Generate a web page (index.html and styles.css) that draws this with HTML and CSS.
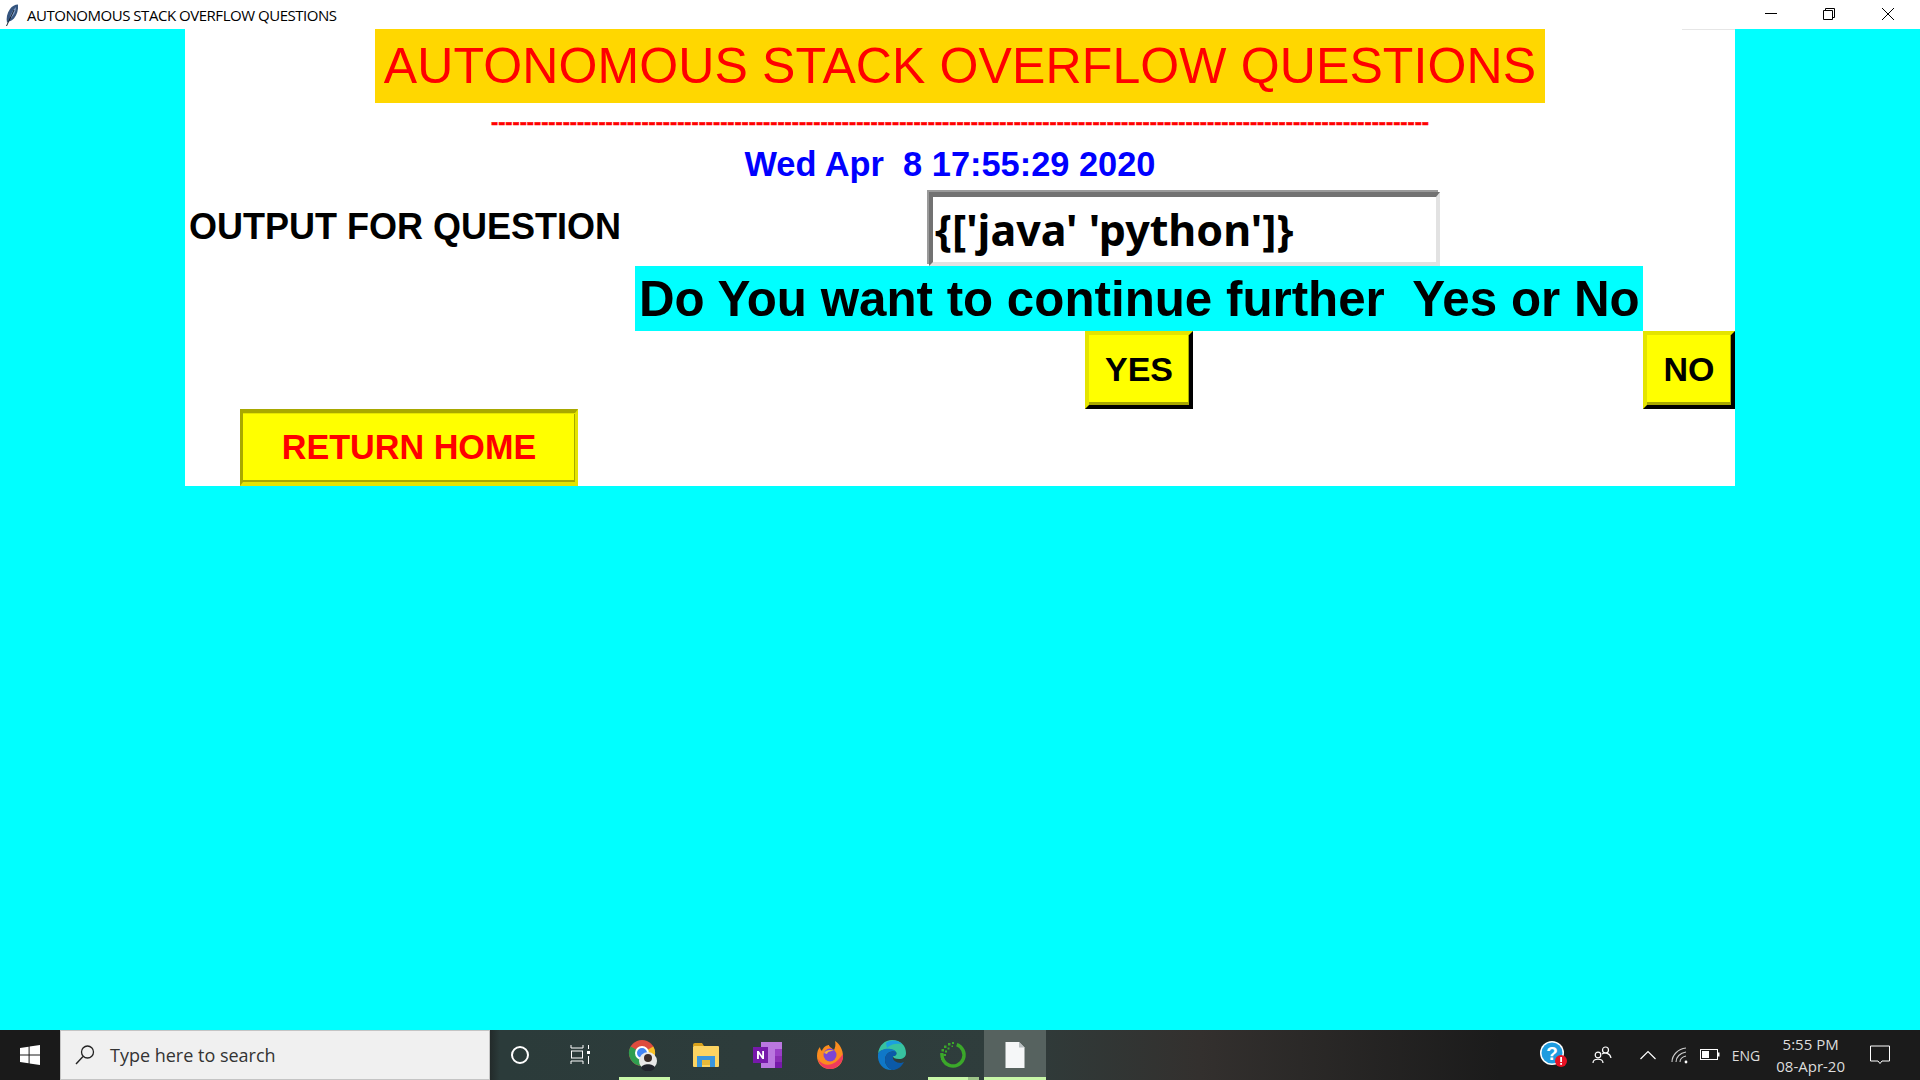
FILE: index.html
```html
<!doctype html>
<html lang="en">
  <head>
    <meta charset="utf-8" />
    <title>AUTONOMOUS STACK OVERFLOW QUESTIONS</title>
    <link rel="stylesheet" href="styles.css">
  </head>
  <body>
    <header class="titlebar">
      <svg class="feather" width="14" height="22" viewBox="0 0 14 22">
        <path d="M2 19 C1 14 2 9 5 5 C7 2 10 0.5 13 0.5 C13.5 6 12 11 9 14.5 C7 16.5 5 17.5 3.5 17.5 Z" fill="#35557f"/>
        <path d="M5 13 C6 9 8 6 11 3 C11 7 9 11 6 14 Z" fill="#7f9cc4"/>
        <path d="M1.5 22 L9 6" stroke="#18222e" stroke-width="1" fill="none"/>
      </svg>
      <span class="titlebar-text">AUTONOMOUS STACK OVERFLOW QUESTIONS</span>
      <div class="window-controls">
        <svg width="58" height="29" viewBox="0 0 58 29"><path d="M19 13.5 H31" stroke="#000"/></svg>
        <svg width="58" height="29" viewBox="0 0 58 29"><path d="M19.5 10.5 H28.5 V19.5 H19.5 Z M21.5 10 V8.5 H30.5 V17.5 H29" stroke="#000" fill="none"/></svg>
        <svg width="58" height="29" viewBox="0 0 58 29"><path d="M20 8 L32 20 M32 8 L20 20" stroke="#000" fill="none"/></svg>
      </div>
    </header>

    <main class="desktop">
      <section class="panel">
        <h1 class="heading">AUTONOMOUS STACK OVERFLOW QUESTIONS</h1>
        <div class="dashes">-----------------------------------------------------------------------------------------------------------------------------------</div>
        <div class="clock">Wed Apr&nbsp;&nbsp;8 17:55:29 2020</div>
        <div class="output-label">OUTPUT FOR QUESTION</div>
        <div class="output-entry">{['java' 'python']}</div>
        <div class="question">Do You want to continue further&nbsp;&nbsp;Yes or No</div>
        <button class="btn btn-yes">YES</button>
        <button class="btn btn-no">NO</button>
        <button class="btn-home">RETURN HOME</button>
      </section>
    </main>

    <footer class="taskbar">
      <div class="start">
        <svg width="20" height="20" viewBox="0 0 20 20"><path d="M0 3 L8.6 1.8 V9.4 H0 Z M9.6 1.6 L20 0 V9.4 H9.6 Z M0 10.4 H8.6 V18.2 L0 17 Z M9.6 10.4 H20 V20 L9.6 18.4 Z" fill="#fff"/></svg>
      </div>
      <div class="search">
        <svg width="22" height="22" viewBox="0 0 22 22"><circle cx="13.5" cy="8" r="6" stroke="#222" stroke-width="1.3" fill="none"/><path d="M9 12.5 L2 20" stroke="#222" stroke-width="1.4"/></svg>
        <span>Type here to search</span>
      </div>
      <div class="system-icon">
        <svg width="20" height="20" viewBox="0 0 20 20"><circle cx="10" cy="10" r="8" stroke="#fff" stroke-width="2" fill="none"/></svg>
      </div>
      <div class="system-icon">
        <svg width="22" height="22" viewBox="0 0 22 22"><path d="M2 1 V4 H14 V1 M2 20 V17 H14 V20" stroke="#fff" fill="none"/><rect x="2.5" y="7" width="11" height="7" stroke="#fff" fill="none"/><rect x="18" y="7" width="3" height="3" fill="#fff"/><path d="M19.5 1 V5 M19.5 12 V20" stroke="#fff"/></svg>
      </div>
      <div class="task-icon running first-app">
        <svg width="32" height="32" viewBox="0 0 32 32">
          <circle cx="14" cy="14" r="13" fill="#dd4b3e"/>
          <path d="M14 14 L2.7 7.5 A13 13 0 0 0 14 27 Z" fill="#2f9e4f"/>
          <path d="M14 14 L25.3 7.5 A13 13 0 0 1 14 27 Z" fill="#f6c026"/>
          <circle cx="14" cy="14" r="6" fill="#4285f4" stroke="#fff" stroke-width="2"/>
          <circle cx="20" cy="22" r="9" fill="#e8e8e8"/>
          <circle cx="20" cy="19" r="4" fill="#3a2c28"/>
          <path d="M13 29 C14 24 26 24 27 29 A9 9 0 0 1 13 29 Z" fill="#20242c"/>
        </svg>
      </div>
      <div class="task-icon">
        <svg width="28" height="26" viewBox="0 0 28 26">
          <path d="M1 3 Q1 1 3 1 H10 L12 4 H1 Z" fill="#d9a21b"/>
          <rect x="1" y="4" width="26" height="21" rx="1" fill="#fcd462"/>
          <path d="M5 14 H23 V25 H18 V18 H10 V25 H5 Z" fill="#3a96dd"/>
          <rect x="10" y="18" width="8" height="5" fill="#e8b93a"/>
        </svg>
      </div>
      <div class="task-icon">
        <svg width="30" height="28" viewBox="0 0 30 28">
          <path d="M8 1 H29 V27 H8 Z" fill="#ba77e0"/>
          <rect x="22" y="8" width="7" height="7" fill="#9a3fc7"/>
          <rect x="22" y="15" width="7" height="6" fill="#8a2db5"/>
          <path d="M22 21 H29 V27 H22 Z" fill="#7719aa"/>
          <rect x="0" y="6" width="15" height="16" fill="#7719aa"/>
          <path d="M4 18 V10 H5.8 L9.2 15 V10 H11 V18 H9.3 L5.9 13 V18 Z" fill="#fff"/>
        </svg>
      </div>
      <div class="task-icon">
        <svg width="28" height="30" viewBox="0 0 28 30">
          <path d="M14 29 C6 29 1 23 1 16 C1 12 2 9 4 7 C4 9 5 10 6 11 C7 7 11 5 13 5 C13 7 16 8 18 10 C19 8 20 5 19 1 C24 4 27 10 27 16 C27 23 22 29 14 29 Z" fill="#fb8c1f"/>
          <path d="M14 29 C8 29 3 25 2 19 C5 24 11 26 16 24 C21 22 24 18 27 14 C28 22 22 29 14 29 Z" fill="#ef3b5d"/>
          <circle cx="14" cy="15" r="6.5" fill="#7c46d3"/>
          <path d="M8 13 C10 10 14 9 18 11 C15 11 12 11 11 14 Z" fill="#f9b632"/>
        </svg>
      </div>
      <div class="task-icon">
        <svg width="30" height="32" viewBox="0 0 30 32">
          <path d="M1 15 C2 6 8 1 15 1 C24 1 29 7 29 14 C29 18 26 20 22 20 C18 20 16 19 16 17 C19 17 20 15 19 13 C16 9 3 9 1 15 Z" fill="#37c2a0"/>
          <path d="M9 4 C12 1 20 0 25 5 C20 4 13 5 10 9 Z" fill="#1b9fe0"/>
          <path d="M1 15 C4 8 17 9 19 13 C14 11 8 14 8 21 C8 26 12 30 16 31 C7 32 0 25 1 15 Z" fill="#0f78c8"/>
          <path d="M8 21 C8 14 14 11 19 13 C20 15 19 17 16 17 C15 21 19 24 24 24 L27 23 C24 29 19 31 16 31 C12 30 8 26 8 21 Z" fill="#0b5aa8"/>
        </svg>
      </div>
      <div class="task-icon running-split">
        <svg width="28" height="28" viewBox="0 0 28 28">
          <circle cx="14" cy="14" r="11" stroke="#3ba82a" stroke-width="3.5" fill="none" stroke-dasharray="72 28" pathLength="100" transform="rotate(-70 14 14)"/>
          <g fill="#3ba82a">
            <rect x="1.5" y="12" width="2.5" height="2.5"/>
            <rect x="5" y="13" width="2" height="2"/>
            <rect x="2.5" y="8" width="2.5" height="2.5"/>
            <rect x="6" y="9.5" width="2" height="2"/>
            <rect x="5" y="4.5" width="2.5" height="2.5"/>
            <rect x="8.5" y="6.5" width="2" height="2"/>
            <rect x="9" y="2" width="2.5" height="2.5"/>
            <rect x="12.5" y="4.5" width="1.5" height="1.5"/>
            <rect x="13" y="1" width="2" height="2"/>
            <rect x="2" y="16.5" width="2.5" height="2.5"/>
          </g>
        </svg>
      </div>
      <div class="task-icon active">
        <svg width="20" height="28" viewBox="0 0 20 28"><path d="M0.5 1 H14 L19.5 6.5 V27 H0.5 Z" fill="#f5f7f8"/><path d="M14 1 L19.5 6.5 H14 Z" fill="#b9c0c2"/></svg>
      </div>

      <div class="tray">
        <svg class="tray-help" width="30" height="30" viewBox="0 0 30 30">
          <circle cx="13" cy="13" r="12" fill="#fff"/>
          <circle cx="13" cy="13" r="10.5" fill="#1f9ce0"/>
          <text x="13" y="19.5" class="tray-help-mark">?</text>
          <circle cx="22" cy="21" r="6" fill="#e81123"/>
          <rect x="21.2" y="17" width="1.8" height="5" fill="#fff"/>
          <rect x="21.2" y="23" width="1.8" height="1.8" fill="#fff"/>
        </svg>
        <svg class="tray-people" width="20" height="20" viewBox="0 0 20 20"><circle cx="13.5" cy="5" r="3" stroke="#fff" stroke-width="1.2" fill="none"/><circle cx="6" cy="10" r="2.8" stroke="#fff" stroke-width="1.2" fill="none"/><path d="M1 18 C1 13 11 13 11 18 M10 9 C13 7 18 8 19 13" stroke="#fff" stroke-width="1.2" fill="none"/></svg>
        <svg class="tray-chevron" width="18" height="12" viewBox="0 0 18 12"><path d="M1.5 10 L9 2.5 L16.5 10" stroke="#fff" stroke-width="1.2" fill="none"/></svg>
        <svg class="tray-wifi" width="18" height="18" viewBox="0 0 18 18"><path d="M1 16 C1 9 7 3 15 2 M5 16 C5 11 9 7 15 6 M9 16 C9 13 11 11 15 10" stroke="#cfcfcf" stroke-width="1.1" fill="none"/><circle cx="15" cy="16" r="1.4" fill="#fff"/></svg>
        <svg class="tray-battery" width="20" height="12" viewBox="0 0 20 12"><rect x="0.5" y="0.5" width="17" height="10" stroke="#fff" fill="none"/><rect x="2" y="2" width="7" height="7" fill="#fff"/><rect x="18" y="3.5" width="1.5" height="4" fill="#fff"/></svg>
        <span class="tray-lang">ENG</span>
        <div class="tray-clock"><span>5:55 PM</span><span>08-Apr-20</span></div>
        <svg class="tray-notify" width="20" height="20" viewBox="0 0 20 20"><path d="M0.5 1 H19.5 V16 H12 L10 18.5 L8 16 H0.5 Z" stroke="#fff" fill="none"/></svg>
      </div>
    </footer>
  </body>
</html>
```

FILE: styles.css
```css
html,
body {
  margin: 0;
  padding: 0;
  width: 100%;
  height: 100%;
  overflow: hidden;
}

body {
  display: flex;
  flex-direction: column;
  background-color: #0ff;
  font-family: "Liberation Sans", Arial, sans-serif;
}

.titlebar {
  display: flex;
  align-items: center;
  height: 29px;
  background-color: #fff;
}

.feather {
  margin-left: 5px;
}

.titlebar-text {
  margin-left: 8px;
  font-family: "Open Sans", "Noto Sans", sans-serif;
  font-size: 15px;
  letter-spacing: -0.47px;
  color: #000;
}

.window-controls {
  display: flex;
  margin-left: auto;
}

.desktop {
  flex: 1;
  padding: 0 185px;
}

.panel {
  position: relative;
  display: grid;
  grid-template-columns: 450px 1008px 92px;
  grid-template-rows: 74px 42px 43px 78px 65px 78px 77px;
  height: 457px;
  background-color: #fff;
}

.panel::before {
  content: " ";
  position: absolute;
  top: 0;
  right: 0;
  width: 53px;
  height: 1px;
  background-color: #e6e6e6;
}

.heading {
  grid-column: 1 / -1;
  justify-self: center;
  margin: 0;
  padding: 0 9px;
  background-color: #ffd700;
  color: #f00;
  font-size: 50px;
  font-weight: normal;
  letter-spacing: 0.12px;
  line-height: 74px;
  white-space: nowrap;
}

.dashes {
  grid-column: 1 / -1;
  justify-self: center;
  color: #f00;
  font-size: 21.5px;
  font-weight: bold;
  line-height: 39px;
  white-space: nowrap;
  -webkit-text-stroke: 0.5px #f00;
}

.clock {
  grid-column: 1 / -1;
  justify-self: center;
  margin-right: 20px;
  color: #00f;
  font-size: 34.4px;
  font-weight: bold;
  line-height: 38px;
  white-space: nowrap;
}

.output-label {
  grid-column: 1;
  align-self: center;
  margin-left: 4px;
  font-size: 36px;
  font-weight: bold;
  white-space: nowrap;
}

.output-entry {
  grid-column: 2;
  justify-self: start;
  align-self: end;
  margin-left: 294px;
  box-sizing: border-box;
  width: 511px;
  height: 74px;
  padding-left: 2px;
  border: 4px solid;
  border-width: 5px 4px 4px 4px;
  border-color: #727272 #e2e2e2 #e2e2e2 #727272;
  box-shadow: -2px -2px 0 #9a9a9a;
  font-family: "Noto Sans", "Open Sans", sans-serif;
  font-size: 43px;
  font-weight: bold;
  line-height: 66px;
  white-space: nowrap;
}

.question {
  grid-column: 2;
  box-sizing: border-box;
  padding: 1px 0 0 4px;
  background-color: #0ff;
  font-size: 49.3px;
  font-weight: bold;
  line-height: 64px;
  white-space: nowrap;
}

.btn {
  box-sizing: border-box;
  padding: 0 0 2px;
  background-color: #ff0;
  border: 4px solid;
  border-color: #e4e400 #000 #000 #e4e400;
  box-shadow: inset -1px -3px 0 #a8a800;
  color: #000;
  font-family: inherit;
  font-size: 34px;
  font-weight: bold;
}

.btn-yes {
  grid-column: 2;
  justify-self: center;
  width: 108px;
}

.btn-no {
  grid-column: 3;
  grid-row: 6;
}

.btn-home {
  grid-column: 1;
  grid-row: 7;
  box-sizing: border-box;
  width: 338px;
  margin-left: 55px;
  padding: 0;
  background-color: #ff0;
  border: 3px solid;
  border-width: 4px 3px;
  border-color: #a8a800 #e4e400 #e4e400 #a8a800;
  box-shadow: inset 0 1px 0 #e4e400, inset -1px -2px 0 #a8a800;
  color: #f00;
  font-family: inherit;
  font-size: 34.2px;
  font-weight: bold;
}

.taskbar {
  display: flex;
  align-items: stretch;
  height: 50px;
  background: linear-gradient(90deg, #1a1a1a 0, #1a1a1a 480px, #2b3b3a 500px, #2f3d3c 1000px, #33302e 1200px, #1b1b1b 1500px);
  color: #fff;
}

.start {
  display: flex;
  align-items: center;
  justify-content: center;
  width: 60px;
}

.search {
  display: flex;
  align-items: center;
  gap: 14px;
  box-sizing: border-box;
  width: 430px;
  padding-left: 13px;
  background-color: #f0f0f0;
  border: 1px solid #c4c4c4;
  color: #333;
  font-family: "Open Sans", "Noto Sans", sans-serif;
  font-size: 18px;
}

.system-icon {
  display: flex;
  align-items: center;
  justify-content: center;
  width: 60px;
}

.task-icon {
  position: relative;
  display: flex;
  align-items: center;
  justify-content: center;
  width: 61.8px;
}

.first-app {
  margin-left: 3.6px;
}

.task-icon.running::after,
.task-icon.active::after,
.task-icon.running-split::after {
  content: " ";
  position: absolute;
  left: 5px;
  right: 5px;
  bottom: 0;
  height: 3px;
  background-color: #c8f7a8;
}

.task-icon.active {
  background-color: #56625f;
}

.task-icon.active::after {
  left: 0;
  right: 0;
}

.task-icon.running-split::after {
  background: linear-gradient(90deg, #c8f7a8 40px, #9cc488 40px);
}

.tray {
  display: flex;
  align-items: center;
  margin-left: auto;
  height: 100%;
}

.tray-help {
  margin-right: 23px;
}

.tray-people {
  margin-right: 27px;
}

.tray-chevron {
  margin-right: 14px;
}

.tray-wifi {
  margin-right: 11px;
}

.tray-battery {
  margin-right: 12px;
}

.tray-help-mark {
  fill: #fff;
  font-family: "Liberation Sans", sans-serif;
  font-size: 19px;
  font-weight: bold;
  text-anchor: middle;
}

.tray-lang,
.tray-clock {
  color: #ddd;
  font-family: "Open Sans", "Noto Sans", sans-serif;
  font-size: 14px;
}

.tray-clock {
  display: flex;
  flex-direction: column;
  align-items: center;
  gap: 3px;
  margin-left: 16px;
  font-size: 15px;
  line-height: 19px;
}

.tray-notify {
  margin-left: 25px;
  margin-right: 30px;
}
```
